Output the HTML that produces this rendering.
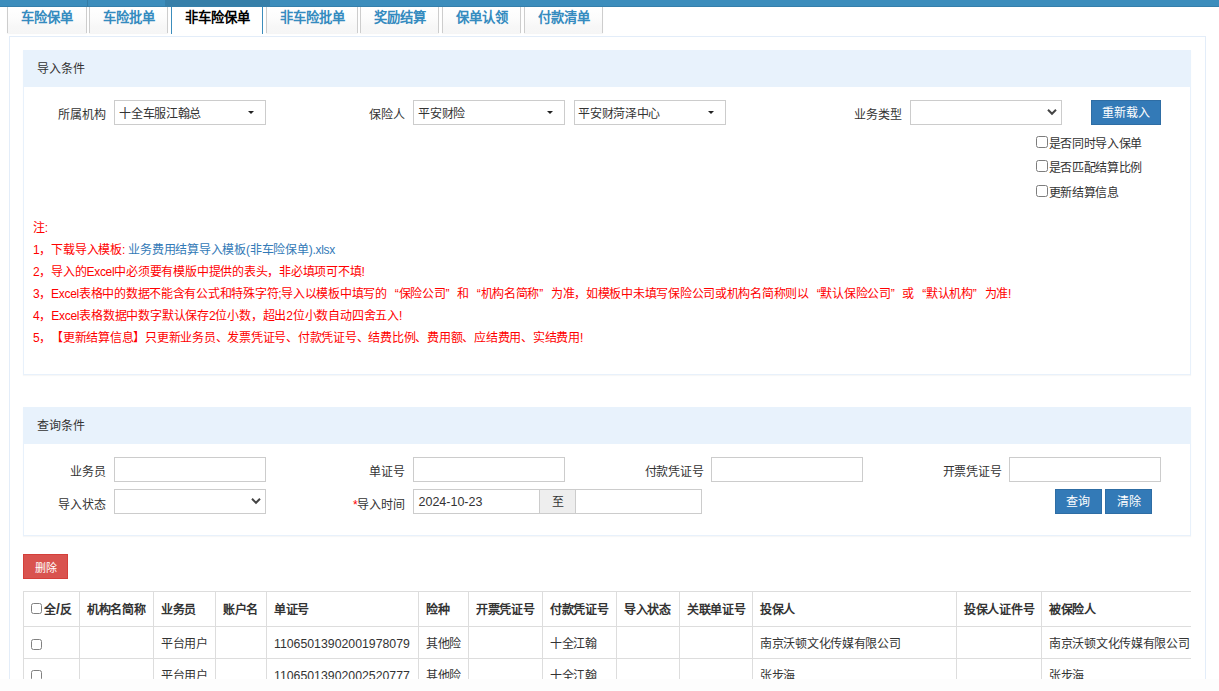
<!DOCTYPE html>
<html lang="zh-CN">
<head>
<meta charset="utf-8">
<title>非车险保单</title>
<style>
*{box-sizing:border-box;}
html,body{margin:0;padding:0;}
body{width:1219px;height:691px;overflow:hidden;background:#fdfdfd;font-family:"Liberation Sans",sans-serif;font-size:12px;letter-spacing:-0.3px;color:#333;text-spacing-trim:space-all;}
#page{position:absolute;left:0;top:0;width:1219px;height:679px;overflow:hidden;background:#fff;}
.abs{position:absolute;}
/* top bar */
#topbar{left:0;top:0;width:1219px;height:7px;background:#3c8dbc;border-bottom:1px solid #357fab;}
#topdark{left:165px;top:0;width:105px;height:7px;background:#367fa9;}
#topline{left:87px;top:0;width:1px;height:7px;background:#357ca5;}
/* tabs */
.tab{position:absolute;top:7px;height:25.5px;border-left:1px solid #cdcdcd;border-right:1px solid #cdcdcd;background:linear-gradient(#ffffff 0%,#fcfcfc 40%,#f7f7f7 75%,#f6f6f6 100%);color:#358bbf;font-weight:bold;font-size:13.33px;letter-spacing:0;line-height:21px;text-align:center;white-space:nowrap;overflow:hidden;box-shadow:0 1px 1px rgba(0,0,0,0.04);}
.tab.on{background:#fff;color:#000;border-color:#3c8dbc;height:26.5px;box-shadow:none;}
/* panels */
#outer{left:9px;top:36px;width:1197px;height:660px;border:1px solid #e3edf9;border-radius:0;background:#fff;}
.panel{position:absolute;left:23px;width:1168px;border:1px solid #e8f1fb;border-radius:0;background:#fff;box-shadow:0 1px 1px rgba(0,0,0,0.03);}
.phead{position:absolute;left:-1px;top:-1px;width:1168px;height:36.5px;background:#e8f2fc;border-radius:1px 1px 0 0;line-height:38.5px;letter-spacing:0;padding-left:14px;color:#333;font-size:12px;}
.lbl{position:absolute;margin-left:0.3px;height:25px;line-height:32px;text-align:right;white-space:nowrap;color:#333;font-size:12px;letter-spacing:-0.3px;}
.inp{position:absolute;height:25px;border:1px solid #ccc;background:#fff;font-size:12px;letter-spacing:-0.3px;line-height:26px;padding-left:4.3px;color:#333;white-space:nowrap;overflow:hidden;}
.caret{position:absolute;width:0;height:0;border-left:3.5px solid transparent;border-right:3.5px solid transparent;border-top:3.5px solid #222;}
.chev{position:absolute;width:12px;height:8px;}
.btn{position:absolute;letter-spacing:0;height:25px;background:#337ab7;border:1px solid #2e6da4;color:#fff;font-size:12px;line-height:25px;text-align:center;white-space:nowrap;overflow:hidden;}
.cb{position:absolute;width:12px;height:12px;border:1px solid #7d7d7d;border-radius:2.5px;background:#fff;}
.cbt{position:absolute;height:16px;line-height:16px;font-size:12px;letter-spacing:-0.3px;color:#333;white-space:nowrap;}
.note{position:absolute;left:33px;height:22px;line-height:22px;font-size:12px;letter-spacing:-0.3px;color:#f00;white-space:nowrap;overflow:visible;text-spacing-trim:space-all;text-align:justify;text-align-last:justify;text-justify:inter-character;}
.q{display:inline-block;width:11.7px;overflow:visible;}
.ql{text-align:right;text-align-last:right;}
.qr{text-align:left;text-align-last:left;}
.note a{color:#337ab7;text-decoration:none;}
/* table */
#tblwrap{left:23px;top:591px;width:1168px;height:100px;overflow:hidden;}
table{border-collapse:collapse;table-layout:fixed;width:1400px;font-size:12px;color:#333;}
th,td{border:1px solid #ddd;padding:0 0 0 7px;text-align:left;white-space:nowrap;overflow:hidden;vertical-align:middle;font-weight:normal;}
th{font-weight:bold;height:35px;padding-top:0;padding-bottom:1px;}
td{height:32px;padding-top:0;padding-bottom:1px;}
td.num{font-size:12.3px;letter-spacing:0;padding-top:2px;padding-bottom:0;}
.tcb{position:absolute;width:11px;height:11px;border:1px solid #808080;border-radius:2.5px;background:#fff;}
</style>
</head>
<body>
<div id="page">
  <div id="topbar" class="abs"></div>
  <div id="topdark" class="abs"></div>
  <div id="topline" class="abs"></div>

  <div class="tab" style="left:7px;width:80px;">车险保单</div>
  <div class="tab" style="left:89px;width:79px;">车险批单</div>
  <div class="tab on" style="left:171px;width:92px;">非车险保单</div>
  <div class="tab" style="left:266px;width:92px;">非车险批单</div>
  <div class="tab" style="left:360px;width:79px;">奖励结算</div>
  <div class="tab" style="left:442px;width:79px;">保单认领</div>
  <div class="tab" style="left:524px;width:79px;">付款清单</div>

  <div id="outer" class="abs"></div>

  <!-- import panel -->
  <div class="panel" style="top:50px;height:325px;">
    <div class="phead">导入条件</div>
  </div>
  <div class="lbl" style="left:35px;width:70px;top:100px;line-height:31px;">所属机构</div>
  <div class="inp" style="left:114px;top:100px;width:152px;">十全车服江翰总</div>
  <div class="caret" style="left:248px;top:111px;"></div>

  <div class="lbl" style="left:334px;width:70px;top:100px;line-height:31px;">保险人</div>
  <div class="inp" style="left:413px;top:100px;width:152px;">平安财险</div>
  <div class="caret" style="left:547px;top:111px;"></div>
  <div class="inp" style="left:574px;top:100px;width:152px;padding-left:3.3px;">平安财菏泽中心</div>
  <div class="caret" style="left:708px;top:111px;"></div>

  <div class="lbl" style="left:831px;width:70px;top:100px;line-height:31px;">业务类型</div>
  <div class="inp" style="left:910px;top:100px;width:152px;"></div>
  <svg class="chev" style="left:1046px;top:108px;" viewBox="0 0 12 8"><path d="M2 1.8 L6 5.8 L10 1.8" fill="none" stroke="#444" stroke-width="2"/></svg>
  <div class="btn" style="left:1091px;top:100px;width:70px;">重新载入</div>

  <div class="cb" style="left:1036px;top:136px;"></div><div class="cbt" style="left:1048.5px;top:136px;">是否同时导入保单</div>
  <div class="cb" style="left:1036px;top:160px;"></div><div class="cbt" style="left:1048.5px;top:160px;">是否匹配结算比例</div>
  <div class="cb" style="left:1036px;top:184.5px;"></div><div class="cbt" style="left:1048.5px;top:185px;">更新结算信息</div>

  <div class="note" style="top:217px;">注:</div>
  <div class="note" style="top:239px;width:302px;">1，下载导入模板: <a>业务费用结算导入模板(非车险保单).xlsx</a></div>
  <div class="note" style="top:261px;width:331.5px;">2，导入的Excel中必须要有模版中提供的表头，非必填项可不填!</div>
  <div class="note" style="top:283px;width:978px;">3，Excel表格中的数据不能含有公式和特殊字符;导入以模板中填写的<span class="q ql">“</span>保险公司<span class="q qr">”</span>和<span class="q ql">“</span>机构名简称<span class="q qr">”</span>为准，如模板中未填写保险公司或机构名简称则以<span class="q ql">“</span>默认保险公司<span class="q qr">”</span>或<span class="q ql">“</span>默认机构<span class="q qr">”</span>为准!</div>
  <div class="note" style="top:305px;width:369px;">4，Excel表格数据中数字默认保存2位小数，超出2位小数自动四舍五入!</div>
  <div class="note" style="top:327px;width:550px;">5，【更新结算信息】只更新业务员、发票凭证号、付款凭证号、结费比例、费用额、应结费用、实结费用!</div>

  <!-- query panel -->
  <div class="panel" style="top:407px;height:129px;">
    <div class="phead">查询条件</div>
  </div>
  <div class="lbl" style="left:35px;width:70px;top:456px;">业务员</div>
  <div class="inp" style="left:114px;top:457px;width:152px;"></div>
  <div class="lbl" style="left:334px;width:70px;top:456px;">单证号</div>
  <div class="inp" style="left:413px;top:457px;width:152px;"></div>
  <div class="lbl" style="left:623px;width:80px;top:456px;">付款凭证号</div>
  <div class="inp" style="left:711px;top:457px;width:152px;"></div>
  <div class="lbl" style="left:921px;width:80px;top:456px;">开票凭证号</div>
  <div class="inp" style="left:1009px;top:457px;width:152px;"></div>

  <div class="lbl" style="left:35px;width:70px;top:489px;">导入状态</div>
  <div class="inp" style="left:114px;top:489px;width:152px;"></div>
  <svg class="chev" style="left:250px;top:497px;" viewBox="0 0 12 8"><path d="M2 1.8 L6 5.8 L10 1.8" fill="none" stroke="#444" stroke-width="2"/></svg>
  <div class="lbl" style="left:334px;width:70px;top:489px;"><span style="color:#f00">*</span>导入时间</div>
  <div class="inp" style="left:413px;top:489px;width:127px;padding-left:4.5px;font-size:12.5px;letter-spacing:0;line-height:25px;">2024-10-23</div>
  <div class="inp" style="left:539px;top:489px;width:37px;background:#eee;padding:0;text-align:center;line-height:25px;">至</div>
  <div class="inp" style="left:575px;top:489px;width:127px;"></div>
  <div class="btn" style="left:1055px;top:489px;width:46.5px;">查询</div>
  <div class="btn" style="left:1105px;top:489px;width:47px;">清除</div>

  <div class="btn" style="left:23px;top:554px;width:45px;background:#d9534f;border:1px solid #d43f3a;font-size:11px;line-height:26px;">删除</div>

  <div id="tblwrap" class="abs">
    <table>
      <colgroup>
        <col style="width:56px"><col style="width:74px"><col style="width:62px"><col style="width:51px"><col style="width:152px"><col style="width:50px"><col style="width:74px"><col style="width:74px"><col style="width:63px"><col style="width:73px"><col style="width:204px"><col style="width:85px"><col style="width:382px">
      </colgroup>
      <tr><th style="padding-left:20px;letter-spacing:0;">全<span style="font-size:14px;line-height:12px;">/</span>反</th><th>机构名简称</th><th>业务员</th><th>账户名</th><th>单证号</th><th>险种</th><th>开票凭证号</th><th>付款凭证号</th><th>导入状态</th><th>关联单证号</th><th>投保人</th><th>投保人证件号</th><th>被保险人</th></tr>
      <tr><td></td><td></td><td>平台用户</td><td></td><td class="num">11065013902001978079</td><td>其他险</td><td></td><td>十全江翰</td><td></td><td></td><td>南京沃顿文化传媒有限公司</td><td></td><td>南京沃顿文化传媒有限公司</td></tr>
      <tr><td></td><td></td><td>平台用户</td><td></td><td class="num">11065013902002520777</td><td>其他险</td><td></td><td>十全江翰</td><td></td><td></td><td>张步海</td><td></td><td>张步海</td></tr>
    </table>
  </div>
  <div class="tcb" style="left:31px;top:603px;"></div>
  <div class="tcb" style="left:31px;top:638.5px;"></div>
  <div class="tcb" style="left:31px;top:670px;"></div>
</div>
</body>
</html>
